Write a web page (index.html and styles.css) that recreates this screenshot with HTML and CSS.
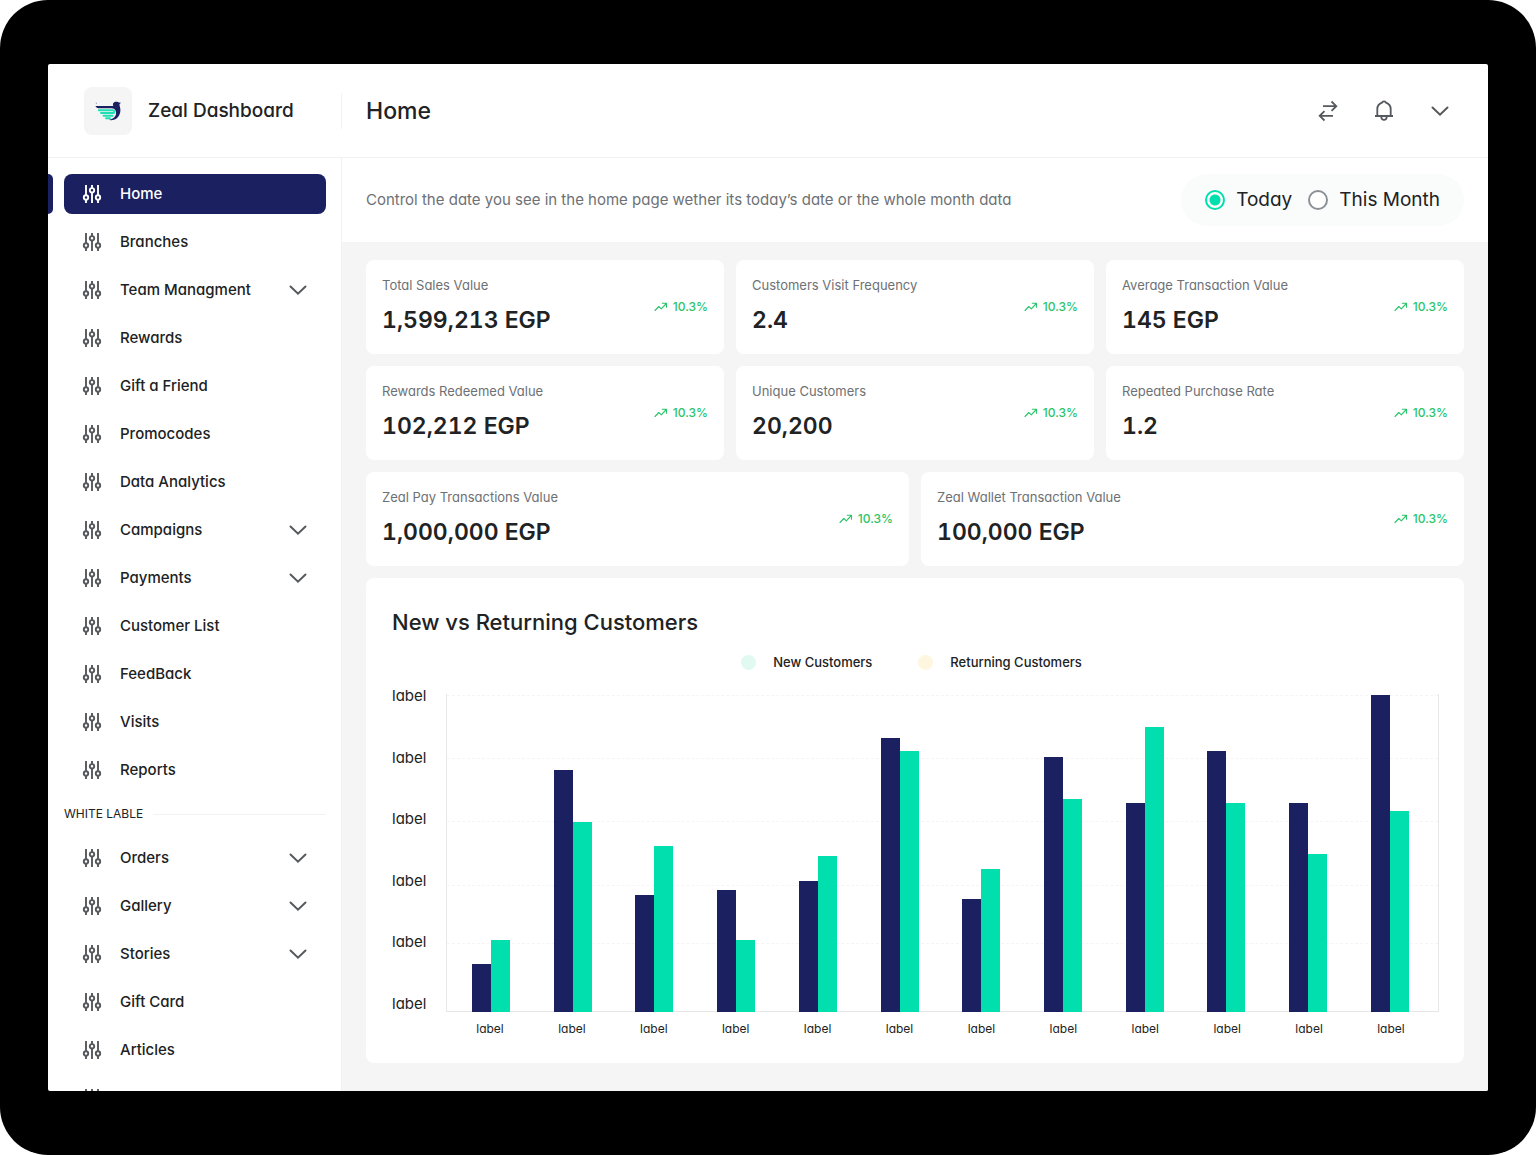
FILE: index.html
```html
<!DOCTYPE html>
<html lang="en">
<head>
<meta charset="utf-8">
<meta name="viewport" content="width=device-width, initial-scale=1">
<title>Zeal Dashboard</title>
<link rel="stylesheet" href="styles.css">
</head>
<body>
<svg class="sprite" aria-hidden="true">
  <symbol id="sliders" viewBox="0 0 24 24"><g fill="none" stroke="currentColor" stroke-width="1.9"><path d="M6 3v10M6 18v3M12 3v3M12 10.800V21M18 3v10M18 18v3"/><circle cx="6" cy="15.500" r="2.200"/><circle cx="12" cy="8.300" r="2.200"/><circle cx="18" cy="15.500" r="2.200"/></g></symbol>
  <symbol id="chevron" viewBox="0 0 24 24"><path d="M4.500 8.500l7.500 7.200 7.500-7.200" fill="none" stroke="currentColor" stroke-width="2" stroke-linecap="round"/></symbol>
  <symbol id="trend" viewBox="0 0 14 12"><path d="M1 9.500l3.800-4 2.500 2.300L12.300 2.500M8.300 2.300h4.200v4" fill="none" stroke="currentColor" stroke-width="1.100" stroke-linecap="round" stroke-linejoin="round"/></symbol>
</svg>
<div class="device">
  <div class="screen">
    <header class="topbar">
      <div class="brand">
        <span class="brand-logo">
          <svg width="28" height="22" viewBox="0 0 28 22" aria-hidden="true">
            <path d="M1.500 2.500l1.800.6-1 .9z" fill="#8d90b0"/>
            <path d="M1.500 6h17.800C18.200 3.500 19.800 1.800 22.300 1.800c1.300 0 2 .4 2.700.6l2 .3-1.500 1.200c-.3 1.300.9 3 .9 6.100 0 6.200-4.300 10.300-9.400 10.300-1 0-1.800-.2-2.300-.5 4.500-.6 7.400-3.400 7.400-6.800 0-3-1.700-4.700-4.800-4.700H4.500C3 8.200 2 7.300 1.500 6z" fill="#1b2060"/>
            <g fill="none" stroke="#1fe0b3" stroke-width="1.900" stroke-linecap="round"><path d="M4.800 10.300h13.700c1 0 1.600.4 1.900 1M7 13h13M9.500 15.700h9M12 18.200h4"/></g>
          </svg>
        </span>
        <span class="brand-name">Zeal Dashboard</span>
      </div>
      <h1 class="page-title">Home</h1>
      <div class="actions">
        <button class="icon-button" type="button" aria-label="Switch account"><svg width="24" height="24" viewBox="0 0 24 24" fill="none" stroke="currentColor" stroke-width="1.800"><path d="M7 7.200h13.500M15.500 2.500L20.300 7.200l-4.800 4.700M17 16.800H3.500M8.500 12.200l-4.800 4.600 4.800 4.700"/></svg></button>
        <button class="icon-button" type="button" aria-label="Notifications"><svg width="24" height="24" viewBox="0 0 24 24" fill="none" stroke="currentColor" stroke-width="1.800"><path d="M3 17h18M5.300 17V10c0-3.200 2-5.400 4.700-6.400.3-1.600 3.700-1.600 4 0 2.700 1 4.700 3.200 4.700 6.400v7M9.200 17.500c.3 4.600 5.300 4.600 5.600 0"/></svg></button>
        <button class="icon-button" type="button" aria-label="Account menu"><svg width="24" height="24"><use href="#chevron"/></svg></button>
      </div>
    </header>
    <div class="layout">
      <nav class="sidebar" aria-label="Main">
        <a class="nav-item active" href="#" aria-current="page"><svg class="nav-icon"><use href="#sliders"/></svg><span>Home</span></a>
        <a class="nav-item" href="#"><svg class="nav-icon"><use href="#sliders"/></svg><span>Branches</span></a>
        <a class="nav-item" href="#"><svg class="nav-icon"><use href="#sliders"/></svg><span>Team Managment</span><svg class="nav-chevron"><use href="#chevron"/></svg></a>
        <a class="nav-item" href="#"><svg class="nav-icon"><use href="#sliders"/></svg><span>Rewards</span></a>
        <a class="nav-item" href="#"><svg class="nav-icon"><use href="#sliders"/></svg><span>Gift a Friend</span></a>
        <a class="nav-item" href="#"><svg class="nav-icon"><use href="#sliders"/></svg><span>Promocodes</span></a>
        <a class="nav-item" href="#"><svg class="nav-icon"><use href="#sliders"/></svg><span>Data Analytics</span></a>
        <a class="nav-item" href="#"><svg class="nav-icon"><use href="#sliders"/></svg><span>Campaigns</span><svg class="nav-chevron"><use href="#chevron"/></svg></a>
        <a class="nav-item" href="#"><svg class="nav-icon"><use href="#sliders"/></svg><span>Payments</span><svg class="nav-chevron"><use href="#chevron"/></svg></a>
        <a class="nav-item" href="#"><svg class="nav-icon"><use href="#sliders"/></svg><span>Customer List</span></a>
        <a class="nav-item" href="#"><svg class="nav-icon"><use href="#sliders"/></svg><span>FeedBack</span></a>
        <a class="nav-item" href="#"><svg class="nav-icon"><use href="#sliders"/></svg><span>Visits</span></a>
        <a class="nav-item" href="#"><svg class="nav-icon"><use href="#sliders"/></svg><span>Reports</span></a>
        <h2 class="nav-heading">WHITE LABLE</h2>
        <a class="nav-item" href="#"><svg class="nav-icon"><use href="#sliders"/></svg><span>Orders</span><svg class="nav-chevron"><use href="#chevron"/></svg></a>
        <a class="nav-item" href="#"><svg class="nav-icon"><use href="#sliders"/></svg><span>Gallery</span><svg class="nav-chevron"><use href="#chevron"/></svg></a>
        <a class="nav-item" href="#"><svg class="nav-icon"><use href="#sliders"/></svg><span>Stories</span><svg class="nav-chevron"><use href="#chevron"/></svg></a>
        <a class="nav-item" href="#"><svg class="nav-icon"><use href="#sliders"/></svg><span>Gift Card</span></a>
        <a class="nav-item" href="#"><svg class="nav-icon"><use href="#sliders"/></svg><span>Articles</span></a>
        <a class="nav-item" href="#" aria-label="More"><svg class="nav-icon"><use href="#sliders"/></svg></a>
      </nav>
      <main class="main">
        <div class="period-bar">
          <p class="period-hint">Control the date you see in the home page wether its today’s date or the whole month data</p>
          <div class="period-switch" role="radiogroup" aria-label="Period">
            <label class="period-option"><input type="radio" name="period" checked>Today</label>
            <label class="period-option"><input type="radio" name="period">This Month</label>
          </div>
        </div>
        <div class="content">
          <section class="stats" aria-label="Key figures">
            <article class="card stat"><div class="stat-text"><h3 class="stat-label">Total Sales Value</h3><p class="stat-value">1,599,213 EGP</p></div><span class="stat-trend"><svg><use href="#trend"/></svg>10.3%</span></article>
            <article class="card stat"><div class="stat-text"><h3 class="stat-label">Customers Visit Frequency</h3><p class="stat-value">2.4</p></div><span class="stat-trend"><svg><use href="#trend"/></svg>10.3%</span></article>
            <article class="card stat"><div class="stat-text"><h3 class="stat-label">Average Transaction Value</h3><p class="stat-value">145 EGP</p></div><span class="stat-trend"><svg><use href="#trend"/></svg>10.3%</span></article>
            <article class="card stat"><div class="stat-text"><h3 class="stat-label">Rewards Redeemed Value</h3><p class="stat-value">102,212 EGP</p></div><span class="stat-trend"><svg><use href="#trend"/></svg>10.3%</span></article>
            <article class="card stat"><div class="stat-text"><h3 class="stat-label">Unique Customers</h3><p class="stat-value">20,200</p></div><span class="stat-trend"><svg><use href="#trend"/></svg>10.3%</span></article>
            <article class="card stat"><div class="stat-text"><h3 class="stat-label">Repeated Purchase Rate</h3><p class="stat-value">1.2</p></div><span class="stat-trend"><svg><use href="#trend"/></svg>10.3%</span></article>
            <article class="card stat stat-wide"><div class="stat-text"><h3 class="stat-label">Zeal Pay Transactions Value</h3><p class="stat-value">1,000,000 EGP</p></div><span class="stat-trend"><svg><use href="#trend"/></svg>10.3%</span></article>
            <article class="card stat stat-wide"><div class="stat-text"><h3 class="stat-label">Zeal Wallet Transaction Value</h3><p class="stat-value">100,000 EGP</p></div><span class="stat-trend"><svg><use href="#trend"/></svg>10.3%</span></article>
          </section>
          <section class="card chart">
            <h2 class="chart-title">New vs Returning Customers</h2>
            <ul class="legend">
              <li class="legend-new">New Customers</li>
              <li class="legend-returning">Returning Customers</li>
            </ul>
            <div class="chart-body">
              <div class="y-axis"><span>label</span><span>label</span><span>label</span><span>label</span><span>label</span><span>label</span></div>
              <div class="plot">
                <div class="gridlines"><i></i><i></i><i></i><i></i><i></i></div>
                <div class="bars">
                  <div class="pair"><b style="--value:48"></b><b style="--value:72"></b></div>
                  <div class="pair"><b style="--value:242"></b><b style="--value:190"></b></div>
                  <div class="pair"><b style="--value:117"></b><b style="--value:166"></b></div>
                  <div class="pair"><b style="--value:122"></b><b style="--value:72"></b></div>
                  <div class="pair"><b style="--value:131"></b><b style="--value:156"></b></div>
                  <div class="pair"><b style="--value:274"></b><b style="--value:261"></b></div>
                  <div class="pair"><b style="--value:113"></b><b style="--value:143"></b></div>
                  <div class="pair"><b style="--value:255"></b><b style="--value:213"></b></div>
                  <div class="pair"><b style="--value:209"></b><b style="--value:285"></b></div>
                  <div class="pair"><b style="--value:261"></b><b style="--value:209"></b></div>
                  <div class="pair"><b style="--value:209"></b><b style="--value:158"></b></div>
                  <div class="pair"><b style="--value:317"></b><b style="--value:201"></b></div>
                </div>
              </div>
              <div class="x-axis"><span>label</span><span>label</span><span>label</span><span>label</span><span>label</span><span>label</span><span>label</span><span>label</span><span>label</span><span>label</span><span>label</span><span>label</span></div>
            </div>
          </section>
        </div>
      </main>
    </div>
  </div>
</div>
</body>
</html>
```
FILE: styles.css
```css
:root {
  --navy: #1b2060;
  --mint: #00dfad;
  --ink: #202223;
  --icon: #55585c;
  --muted: #6d7175;
  --line: #f2f2f3;
  --surface: #f5f5f5;
  --green: #2bc46a;
}

* { box-sizing: border-box; }

body {
  margin: 0;
  background: #fff;
  color: var(--ink);
  font-family: Inter, "Liberation Sans", sans-serif;
  font-feature-settings: "cv11";
  font-size: 15px;
  line-height: 20px;
}

h1, h2, h3, p, ul { margin: 0; padding: 0; font-weight: inherit; }

.sprite { display: none; }

.device {
  height: 100vh;
  padding: 64px 48px;
  border-radius: 48px;
  background: #000;
}

.screen {
  display: flex;
  flex-direction: column;
  height: 100%;
  border-radius: 2px;
  background: #fff;
  overflow: hidden;
}

/* Top bar */
.topbar {
  display: flex;
  flex: none;
  align-items: center;
  padding-right: 36px;
  height: 94px;
  border-bottom: 1px solid var(--line);
}

.brand {
  display: flex;
  align-items: center;
  gap: 16px;
  width: 294px;
  height: 36px;
  padding-left: 36px;
  border-right: 1px solid var(--line);
}

.brand-logo {
  display: grid;
  place-items: center;
  width: 48px;
  height: 48px;
  border-radius: 8px;
  background: var(--surface);
}

.brand-name { font-size: 19px; font-weight: 500; }

.page-title {
  margin-left: 24px;
  font-size: 23px;
  font-weight: 500;
  line-height: 28px;
}

.actions { display: flex; gap: 32px; margin-left: auto; }

.icon-button {
  display: block;
  width: 24px;
  height: 24px;
  padding: 0;
  border: 0;
  background: none;
  color: var(--icon);
}

.icon-button svg { display: block; }

.layout { display: flex; flex: 1; min-height: 0; }

/* Sidebar */
.sidebar {
  display: flex;
  flex: none;
  flex-direction: column;
  gap: 8px;
  width: 294px;
  padding: 16px 15px 0 0;
  border-right: 1px solid var(--line);
  overflow: hidden;
}

.nav-item {
  display: flex;
  flex: none;
  align-items: center;
  gap: 16px;
  height: 40px;
  margin-left: 16px;
  padding: 0 16px;
  border-radius: 8px;
  color: var(--ink);
  font-weight: 500;
  text-decoration: none;
}

.nav-item.active {
  position: relative;
  background: var(--navy);
  color: #fff;
}

.nav-item.active::before {
  content: "";
  position: absolute;
  inset: 0 auto 0 -16px;
  width: 5px;
  border-radius: 0 6px 6px 0;
  background: var(--navy);
}

.nav-icon, .nav-chevron { width: 24px; height: 24px; color: var(--icon); }
.active .nav-icon { color: #fff; }
.nav-chevron { margin-left: auto; }

.nav-heading {
  display: flex;
  flex: none;
  align-items: center;
  gap: 10px;
  height: 32px;
  margin-left: 16px;
  font-size: 12px;
}

.nav-heading::after {
  content: "";
  flex: 1;
  height: 1px;
  background: var(--line);
}

/* Main column */
.main { flex: 1; min-width: 0; background: var(--surface); }

.period-bar {
  display: flex;
  align-items: center;
  justify-content: space-between;
  padding: 16px 24px;
  background: #fff;
}

.period-hint { color: var(--muted); }

.period-switch {
  display: flex;
  align-items: center;
  gap: 16px;
  height: 52px;
  padding: 0 24px;
  border-radius: 26px;
  background: #fafcfb;
}

.period-option {
  display: flex;
  align-items: center;
  gap: 11px;
  font-size: 19px;
}

.period-option input {
  appearance: none;
  width: 20px;
  height: 20px;
  margin: 0;
  border: 2px solid #8c9196;
  border-radius: 50%;
  background: #fff;
}

.period-option input:checked {
  border-color: var(--mint);
  background: radial-gradient(circle, var(--mint) 5px, #fff 6px);
}

.content {
  display: grid;
  gap: 12px;
  padding: 18px 24px 28px;
}

.card { border-radius: 8px; background: #fff; }

.stats { display: grid; grid-template-columns: repeat(6, 1fr); gap: 12px; }

.stat {
  display: flex;
  grid-column: span 2;
  align-items: center;
  justify-content: space-between;
  min-height: 94px;
  padding: 15px 16px;
}

.stat-wide { grid-column: span 3; }
.stat-text { align-self: flex-start; }
.stat-label { color: var(--muted); font-size: 13px; }

.stat-value {
  margin-top: 11px;
  font-size: 23px;
  font-weight: 600;
  font-variant-numeric: tabular-nums;
  line-height: 28px;
}

.stat-trend {
  display: flex;
  align-items: center;
  gap: 5px;
  color: var(--green);
  font-size: 12px;
  font-weight: 500;
}

.stat-trend svg { width: 14px; height: 12px; }

/* Chart */
.chart { padding: 28px 25px 26px 26px; }
.chart-title { font-size: 22px; font-weight: 500; line-height: 32px; }

.legend {
  display: flex;
  justify-content: center;
  gap: 46px;
  margin: 14px 0;
  padding-right: 8px;
  font-size: 13px;
  font-weight: 500;
  list-style: none;
}

.legend li { display: flex; align-items: center; gap: 17px; }

.legend li::before {
  content: "";
  width: 15px;
  height: 15px;
  border-radius: 50%;
  background: #e0f9f1;
}

.legend .legend-returning::before { background: #fff6df; }

.chart-body { display: grid; grid-template-columns: 54px 1fr; }

.y-axis {
  display: flex;
  flex-direction: column;
  justify-content: space-between;
  height: 328px;
}

.plot {
  display: grid;
  height: 318px;
  margin-top: 8px;
  border: 1px solid #e6e7e8;
  border-top: 0;
}

.gridlines, .bars { grid-area: 1 / 1; }
.gridlines { display: grid; grid-template-rows: 63fr 63fr 64fr 58fr 68fr; padding-top: 1px; }
.gridlines i { border-top: 1px dashed #f5f5f6; }

.bars, .x-axis {
  display: flex;
  justify-content: space-between;
  padding: 0 29px 0 25px;
}

.bars { align-items: flex-end; margin-bottom: -1px; }
.pair { display: flex; align-items: flex-end; width: 38px; height: 100%; }

.pair b {
  flex: 1;
  height: calc(var(--value) / 318 * 100%);
  background: var(--navy);
}

.pair b + b { background: var(--mint); }

.x-axis {
  grid-column: 2;
  margin-top: 7px;
  font-size: 12px;
  line-height: 16px;
}

.x-axis span { width: 38px; text-align: center; }
```
